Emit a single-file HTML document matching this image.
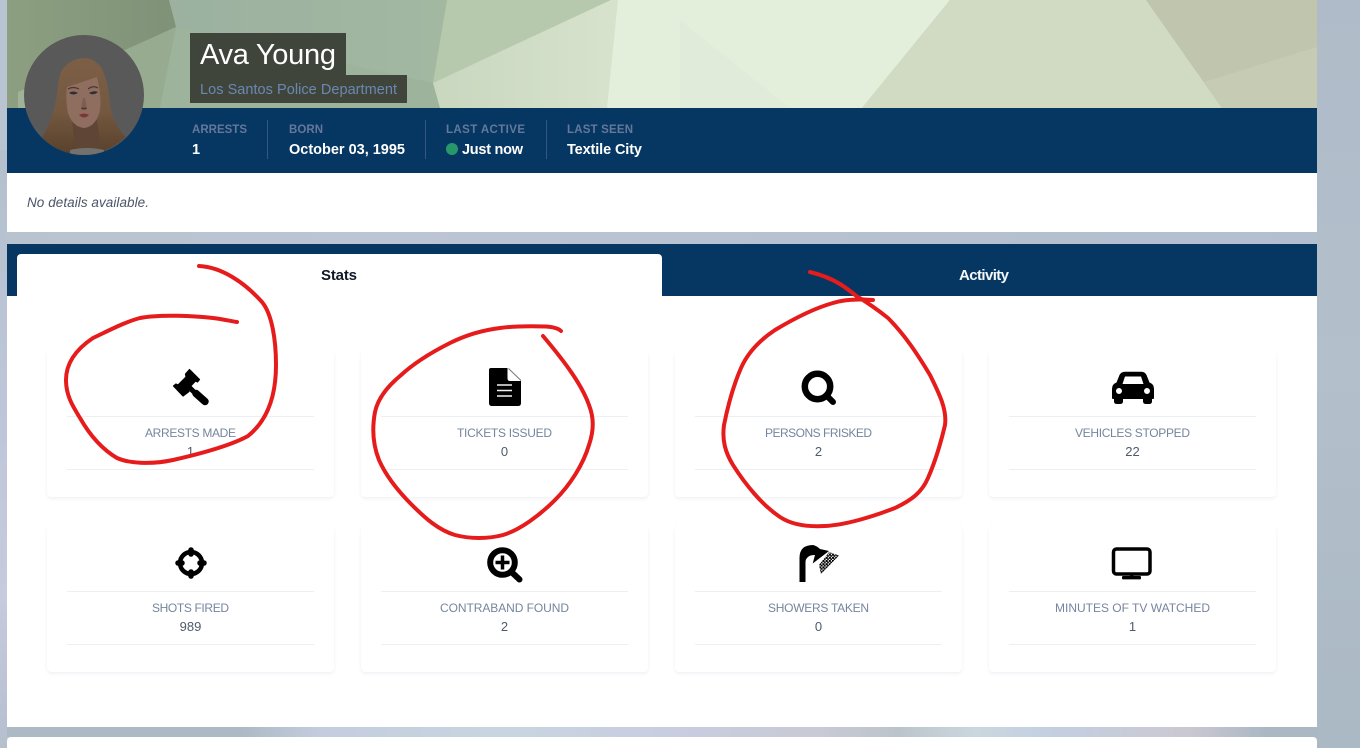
<!DOCTYPE html>
<html lang="en">
<head>
<meta charset="utf-8">
<title>Ava Young</title>
<style>
html,body{margin:0;padding:0}
body{width:1360px;height:748px;overflow:hidden;position:relative;font-family:"Liberation Sans",sans-serif;
background:linear-gradient(100deg,#b9c4d2 0%,#b8c2ce 50%,#aebac6 100%)}
.a{position:absolute}
.panel{position:absolute;left:7px;width:1310px;background:#fff}
.card{position:absolute;width:287px;height:147px;background:#fff;border-radius:4px;box-shadow:0 2px 3px rgba(60,90,130,.07),0 0 1px rgba(60,90,130,.05)}
.card i{position:absolute;left:20px;width:247px;height:1px;background:#edf0f3}
.card i.t{top:66px}.card i.b{top:119px}
svg{position:absolute;left:0;top:0;overflow:visible}
text{font-family:"Liberation Sans",sans-serif}
.lab{font-size:12px;fill:#76859e}
.val{font-size:13px;fill:#4f5a6b;text-anchor:middle}
.sl{font-size:11.5px;font-weight:bold;fill:#64789a}
.sv{font-size:14.5px;font-weight:bold;fill:#fff}
</style>
</head>
<body>
<div class="a" style="left:0;top:150px;width:7px;height:598px;background:linear-gradient(180deg,#b4c0cd,#bcc6d8 40%,#c6cbdd 75%,#b5bfce)"></div>
<div class="a" style="left:1317px;top:0;width:43px;height:748px;background:linear-gradient(180deg,#afbbc8,#b3bfcb 50%,#abb9c5)"></div>
<div class="a" style="left:7px;top:232px;width:1310px;height:12px;background:linear-gradient(90deg,#b9c3cf,#bcc5d4 30%,#b7c1cf 60%,#b3bfcf)"></div>
<div class="a" style="left:7px;top:727px;width:1310px;height:10px;background:linear-gradient(90deg,#adbac5 0,#adbac5 18%,#c4cddd 24%,#c8d5e0 38%,#c9cde0 50%,#c8cad4 62%,#bcc4cb 68%,#cad7de 74%,#c3cfe0 80%,#cbc8d2 90%,#abb8c4 96%,#abb8c4 100%)"></div>

<!-- hero -->
<svg class="a" width="1360" height="108" viewBox="0 0 1360 108" style="left:0;top:0">
<defs>
<linearGradient id="g1" x1="0" y1="0" x2="1" y2="0"><stop offset="0" stop-color="#8d9f80"/><stop offset="1" stop-color="#7f9278"/></linearGradient>
<linearGradient id="g2" x1="0" y1="0" x2="1" y2="0"><stop offset="0" stop-color="#97ad9f"/><stop offset="1" stop-color="#a3b8a1"/></linearGradient>
<linearGradient id="g3" x1="0" y1="0" x2="1" y2="0"><stop offset="0" stop-color="#c9d7bf"/><stop offset="1" stop-color="#d9e4cf"/></linearGradient>
</defs>
<rect x="7" y="0" width="440" height="108" fill="url(#g2)"/>
<polygon points="7,0 169,0 176,27 125,50 60,108 7,108" fill="url(#g1)"/>
<polygon points="18,92 36,84 26,108 18,108" fill="#a0b298"/>
<polygon points="176,27 125,50 100,108 160,108" fill="#96ab90"/>
<polygon points="176,27 433,83 440,108 160,108" fill="#9db39b"/>
<polygon points="447,0 611,0 433,83" fill="#b6c9ac"/>
<polygon points="433,83 611,0 640,0 607,108 440,108" fill="url(#g3)"/>
<polygon points="618,0 950,0 862,108 607,108" fill="#e3efdb"/>
<polygon points="680,20 790,108 680,108" fill="#e0ebd9"/>
<polygon points="950,0 1146,0 1222,108 862,108" fill="#d1dbc3"/>
<polygon points="1146,0 1317,0 1317,108 1222,108" fill="#c0c6ad"/>
<polygon points="1204,82 1317,47 1317,108 1222,108" fill="#c6cbb4"/>
</svg>

<div class="panel" style="top:108px;height:65px;background:#063763"></div>
<div class="panel" style="top:173px;height:59px"></div>
<div class="panel" style="top:244px;height:52px;background:#063763"></div>
<div class="panel" style="top:296px;height:431px"></div>
<div class="panel" style="top:737px;height:11px;border-radius:4px 4px 0 0"></div>
<div class="a" style="left:17px;top:254px;width:645px;height:42px;background:#fff;border-radius:4px 4px 0 0"></div>

<div class="a" style="left:190px;top:33px;width:156px;height:42px;background:#40453c"></div>
<div class="a" style="left:190px;top:75px;width:217px;height:28px;background:#40453c"></div>

<div class="a" style="left:267px;top:120px;width:1px;height:39px;background:#32587f"></div>
<div class="a" style="left:425px;top:120px;width:1px;height:39px;background:#32587f"></div>
<div class="a" style="left:546px;top:120px;width:1px;height:39px;background:#32587f"></div>

<!-- cards -->
<div class="card" style="left:47px;top:350px"><i class="t"></i><i class="b"></i></div>
<div class="card" style="left:361px;top:350px"><i class="t"></i><i class="b"></i></div>
<div class="card" style="left:675px;top:350px"><i class="t"></i><i class="b"></i></div>
<div class="card" style="left:989px;top:350px"><i class="t"></i><i class="b"></i></div>
<div class="card" style="left:47px;top:525px"><i class="t"></i><i class="b"></i></div>
<div class="card" style="left:361px;top:525px"><i class="t"></i><i class="b"></i></div>
<div class="card" style="left:675px;top:525px"><i class="t"></i><i class="b"></i></div>
<div class="card" style="left:989px;top:525px"><i class="t"></i><i class="b"></i></div>

<svg width="1360" height="748" viewBox="0 0 1360 748">
<defs>
<clipPath id="av"><circle cx="84" cy="95" r="60"/></clipPath>
<linearGradient id="hair" x1="0" y1="0" x2="0" y2="1"><stop offset="0" stop-color="#7c5f46"/><stop offset=".55" stop-color="#745840"/><stop offset="1" stop-color="#58402b"/></linearGradient>
<pattern id="chk" width="3.2" height="3.2" patternUnits="userSpaceOnUse">
<rect width="2.1" height="2.1" fill="#000"/><rect x="1.6" y="1.6" width="2.1" height="2.1" fill="#000"/>
</pattern>
</defs>

<!-- avatar -->
<g clip-path="url(#av)">
<rect x="24" y="35" width="120" height="120" fill="#595959"/>
<path d="M60 74C64 65 72 59 83 58C92 58 98 62 102 69C107 79 109 92 110 104C112 118 118 130 126 137C116 146 104 152 90 156H72C60 152 50 146 42 137C48 128 53 114 56 100C58 90 58 81 60 74Z" fill="url(#hair)"/>
<path d="M72 120L97 120L101 150L76 152Z" fill="#5f4535"/>
<path d="M67 87L97 77C100 90 102 104 99 114C96 122 92 127 84 128C76 127 71 122 68 113C66 104 66 95 67 87Z" fill="#8f6e60"/>
<path d="M69 93Q73 90 78 93Q73 96 69 93ZM89 93Q94 90 98 92Q93 96 89 93Z" fill="#2b2f33"/>
<path d="M68 89Q73 86 79 89M88 89Q93 85 98 88" stroke="#4e352a" stroke-width="1.2" fill="none"/>
<path d="M83 98L81 108Q84 110 87 108L85 98Z" fill="#7c5f52"/>
<ellipse cx="84" cy="108.500" rx="3" ry="1" fill="#4f3a33"/>
<path d="M79 115Q84 112 89 115Q84 120 79 115Z" fill="#7d3536"/>
<path d="M70 150Q87 146 104 150V158H70Z" fill="#72716d"/>
</g>

<!-- header text -->
<text x="200" y="64" font-size="29" fill="#fff" textLength="136" lengthAdjust="spacing">Ava Young</text>
<text x="200" y="94" font-size="14.5" fill="#6a88b0" textLength="197" lengthAdjust="spacing">Los Santos Police Department</text>

<text class="sl" x="192" y="133" textLength="55" lengthAdjust="spacing">ARRESTS</text>
<text class="sl" x="289" y="133" textLength="34" lengthAdjust="spacing">BORN</text>
<text class="sl" x="446" y="133" textLength="79" lengthAdjust="spacing">LAST ACTIVE</text>
<text class="sl" x="567" y="133" textLength="66" lengthAdjust="spacing">LAST SEEN</text>
<text class="sv" x="192" y="154">1</text>
<text class="sv" x="289" y="154" textLength="116" lengthAdjust="spacing">October 03, 1995</text>
<circle cx="452" cy="149" r="6" fill="#27986a"/>
<text class="sv" x="462" y="154" textLength="61" lengthAdjust="spacing">Just now</text>
<text class="sv" x="567" y="154" textLength="75" lengthAdjust="spacing">Textile City</text>

<text x="27" y="207" font-size="13.5" font-style="italic" fill="#4a5568" textLength="122" lengthAdjust="spacing">No details available.</text>

<text x="321" y="280" font-size="15" font-weight="bold" fill="#111827" textLength="36" lengthAdjust="spacing">Stats</text>
<text x="959" y="280" font-size="15" font-weight="bold" fill="#f4f6f8" textLength="50" lengthAdjust="spacing">Activity</text>

<!-- labels -->
<text class="lab" x="145" y="437" textLength="91" lengthAdjust="spacing">ARRESTS MADE</text>
<text class="val" x="190.5" y="456">1</text>
<text class="lab" x="457" y="437" textLength="95" lengthAdjust="spacing">TICKETS ISSUED</text>
<text class="val" x="504.5" y="456">0</text>
<text class="lab" x="765" y="437" textLength="107" lengthAdjust="spacing">PERSONS FRISKED</text>
<text class="val" x="818.5" y="456">2</text>
<text class="lab" x="1075" y="437" textLength="115" lengthAdjust="spacing">VEHICLES STOPPED</text>
<text class="val" x="1132.5" y="456">22</text>
<text class="lab" x="152" y="612" textLength="77" lengthAdjust="spacing">SHOTS FIRED</text>
<text class="val" x="190.5" y="631">989</text>
<text class="lab" x="440" y="612" textLength="129" lengthAdjust="spacing">CONTRABAND FOUND</text>
<text class="val" x="504.5" y="631">2</text>
<text class="lab" x="768" y="612" textLength="101" lengthAdjust="spacing">SHOWERS TAKEN</text>
<text class="val" x="818.5" y="631">0</text>
<text class="lab" x="1055" y="612" textLength="155" lengthAdjust="spacing">MINUTES OF TV WATCHED</text>
<text class="val" x="1132.5" y="631">1</text>

<!-- gavel -->
<path d="M189.500 369.500L199.500 379.500L197.500 382L195.500 381L188 389L189 391.500L183 396L173.500 386L176 384L178 385L186 377L185.500 374Z" fill="#000" stroke="#000" stroke-width="1.200" stroke-linejoin="round"/>
<path d="M188 386L194 392" stroke="#000" stroke-width="5"/>
<path d="M196 393.500L205 401.500" stroke="#000" stroke-width="7.500" stroke-linecap="round"/>

<!-- document -->
<path d="M491 368H507.500V378Q507.500 381 510 381H521V403Q521 406 518 406H492Q489 406 489 403V370Q489 368 491 368Z" fill="#000"/>
<path d="M508.500 368.500L521 380.500" stroke="#777" stroke-width="1" fill="none"/>
<path d="M497 385H512M497 390.500H512M497 396H512" stroke="#f2f2f2" stroke-width="1.500"/>

<!-- search -->
<circle cx="817.500" cy="386.500" r="12.700" fill="none" stroke="#000" stroke-width="6.500"/>
<path d="M827 396L833 402" stroke="#000" stroke-width="6" stroke-linecap="round"/>

<!-- car -->
<path fill-rule="evenodd" d="M1125 371.700H1141Q1145 371.700 1146.500 375L1149.500 382.500Q1154 384 1154 389V398Q1154 399 1153 399H1152V401.500Q1152 404 1149 404H1146Q1143 404 1143 401.500V399H1123V401.500Q1123 404 1120 404H1117Q1114 404 1114 401.500V399H1113Q1112 399 1112 398V389Q1112 384 1116.500 382.500L1119.500 375Q1121 371.700 1125 371.700ZM1125 376.500L1122.500 384H1143.500L1141 376.500ZM1119 388A3 3 0 1 0 1119 394A3 3 0 1 0 1119 388ZM1147 388A3 3 0 1 0 1147 394A3 3 0 1 0 1147 388Z"/>

<!-- crosshair -->
<circle cx="191" cy="563" r="11" fill="none" stroke="#000" stroke-width="4.500"/>
<path d="M191 550V554M191 572V576M178 563H182M200 563H204" stroke="#000" stroke-width="5.500" stroke-linecap="round"/>

<!-- search plus -->
<circle cx="502.500" cy="562.500" r="12.300" fill="none" stroke="#000" stroke-width="6"/>
<path d="M511.500 572L519.500 579.500" stroke="#000" stroke-width="6" stroke-linecap="round"/>
<path d="M502.500 555.500V569.500M495.500 562.500H509.500" stroke="#000" stroke-width="3.500"/>

<!-- shower -->
<path d="M799.500 582V558Q799.500 545 813 545Q817 546 820 549L829 551L812.700 563.500L815 555Q810 555 808 557Q805.500 559 805.500 562V582Z" fill="#000"/>
<polygon points="829,552 839,555.500 821,574 819,565" fill="url(#chk)"/>

<!-- tv -->
<rect x="1113.500" y="549" width="36.500" height="25" rx="3" fill="none" stroke="#000" stroke-width="3.500"/>
<rect x="1130" y="575" width="3.400" height="2" fill="#000"/>
<rect x="1122" y="576" width="19" height="3.400" rx="1" fill="#000"/>

<!-- annotations -->
<g fill="none" stroke="#e61c1c" stroke-width="4" stroke-linecap="round" stroke-linejoin="round">
<path d="M199 266C222 267 245 283 262 302C272 314 276 340 276 365C276 395 268 420 248 436C228 447 195 455 173 460C150 465 128 463 117 458C100 448 88 432 80 418C72 405 66 395 66 380C66 362 78 348 93 338C110 330 125 322 140 318C160 314 195 316 213 318C222 319 230 321 237 322"/>
<path d="M561 331C558 328 553 327 546 326.500C530 326 514 326 500 328C484 330 466 335 450 343C432 352 414 363 400 376C388 386 378 398 375 412C372 428 373 445 379 460C386 476 398 491 412 505C424 517 438 530 455 535C470 539 488 539 503 535C520 530 540 515 555 500C570 485 583 465 589 445C594 430 594 418 589 405C582 385 565 362 543 336"/>
<path d="M810 272C822 275 832 279 840 284C848 289 854 294 860 299C865 300 869 300 873 300C860 299 845 299 833 303C815 308 795 318 775 330C760 340 748 352 741 368C734 384 728 405 724 425C722 440 725 452 733 465C745 484 762 505 780 517C792 525 808 527 825 526C845 525 872 517 895 508C912 500 922 492 928 478C935 462 941 442 945 425C947 410 940 395 930 375C918 355 905 335 888 318C878 310 868 303 858 297"/>
</g>
</svg>
</body>
</html>
